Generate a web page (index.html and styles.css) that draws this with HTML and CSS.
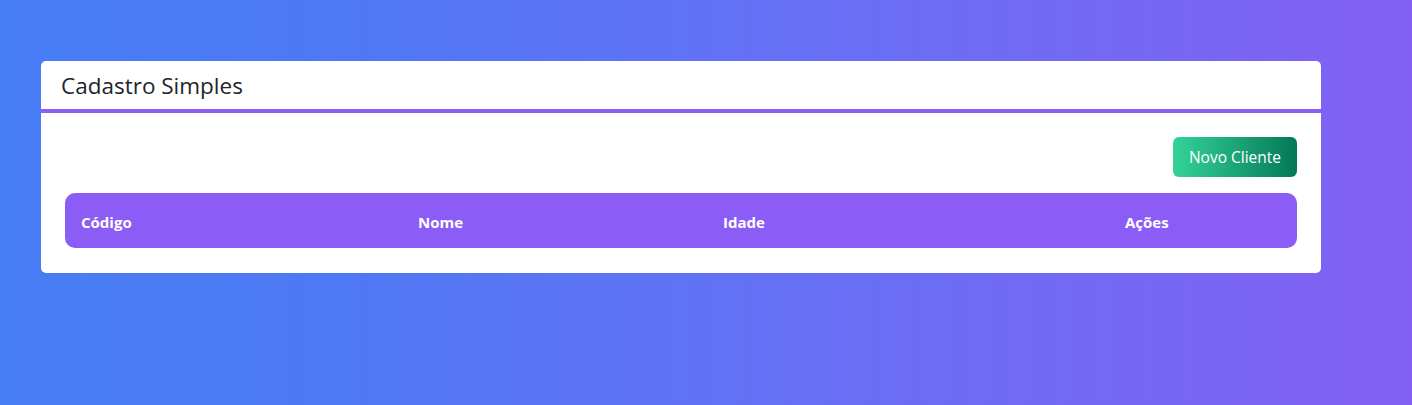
FILE: index.html
```html
<!DOCTYPE html>
<html lang="pt-BR">
<head>
<meta charset="utf-8">
<title>Cadastro Simples</title>
<link rel="stylesheet" href="styles.css">
</head>
<body>
<main class="page">
  <section class="card">
    <header class="card-header">
      <h1 class="card-title">Cadastro Simples</h1>
    </header>
    <div class="card-body">
      <div class="toolbar">
        <button class="btn-new" type="button">Novo Cliente</button>
      </div>
      <table class="data-table">
        <thead>
          <tr>
            <th class="col-code">Código</th>
            <th class="col-name">Nome</th>
            <th class="col-age">Idade</th>
            <th class="col-actions">Ações</th>
          </tr>
        </thead>
        <tbody></tbody>
      </table>
    </div>
  </section>
</main>
</body>
</html>
```
FILE: styles.css
```css
* { box-sizing: border-box; }
html, body { margin: 0; padding: 0; }
body {
  min-height: 405px;
  background: linear-gradient(90deg, #477df5 0%, #4f78f5 25%, #6570f5 55%, #8260f4 100%);
  font-family: "Open Sans", "Noto Sans", sans-serif;
  color: #212529;
}
.page {
  padding: 61px 91px 40px 41px;
}
.card {
  width: 1280px;
  background: #fff;
  border-radius: 5px;
  overflow: hidden;
}
.card-header {
  height: 52px;
  padding: 0 20px;
  display: flex;
  align-items: center;
  border-bottom: 4px solid #8b5cf6;
}
.card-title {
  margin: 0;
  font-size: 22.5px;
  line-height: 1;
  font-weight: 400;
  color: #212529;
  letter-spacing: 0;
  padding-top: 2px;
}
.card-body {
  padding: 24px 24px 25px;
}
.toolbar {
  display: flex;
  justify-content: flex-end;
  margin-bottom: 16px;
}
.btn-new {
  height: 40px;
  width: 124px;
  border: 0;
  border-radius: 6px;
  background: linear-gradient(90deg, #34d399, #047857);
  color: #fff;
  font-family: "Open Sans", "Noto Sans", sans-serif;
  font-size: 15.5px;
  padding: 0 8px;
  cursor: pointer;
}
.data-table {
  width: 100%;
  border-collapse: separate;
  border-spacing: 0;
  table-layout: fixed;
}
.data-table th {
  background: #8b5cf6;
  color: #fff;
  font-size: 15px;
  font-weight: 700;
  text-align: left;
  height: 55px;
  padding: 2px 16px 0;
}
.col-code { width: 337px; border-radius: 10px 0 0 10px; }
.col-name { width: 305px; }
.col-age { width: 402px; }
.col-actions { border-radius: 0 10px 10px 0; }
```
